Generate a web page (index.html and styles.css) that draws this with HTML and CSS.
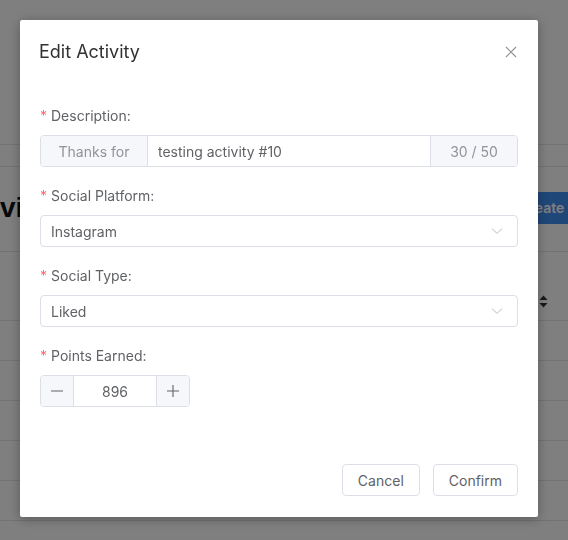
FILE: index.html
```html
<!DOCTYPE html>
<html>
<head>
<meta charset="utf-8">
<link rel="stylesheet" href="styles.css">
</head>
<body>
<div class="page">
  <div class="topbar"></div>
  <div class="subbar"></div>
  <div class="titlerow">
    <h1 class="heading">Activities</h1>
    <button class="create">Create Activity</button>
  </div>
  <div class="thead">
    <span class="sort"><svg width="9" height="13" viewBox="0 0 9 13"><path d="M4.5 0.5 L8.5 5 L0.5 5 Z" fill="#333"/><path d="M4.5 12.5 L8.5 8 L0.5 8 Z" fill="#333"/></svg></span>
  </div>
  <div class="trow"></div>
  <div class="trow"></div>
  <div class="trow"></div>
  <div class="trow"></div>
  <div class="trow"></div>
</div>

<div class="overlay">
  <div class="dialog">
    <div class="dialog-header">
      <span class="dialog-title">Edit Activity</span>
      <span class="close"><svg width="12" height="12" viewBox="0 0 12 12"><path d="M1 1 L11 11 M11 1 L1 11" stroke="#909399" stroke-width="1.2" fill="none"/></svg></span>
    </div>
    <div class="dialog-body">
      <div class="form-item">
        <div class="label"><span class="req">*</span>Description:</div>
        <div class="input-group">
          <div class="addon prefix">Thanks for</div>
          <div class="field">testing activity #10</div>
          <div class="addon suffix">30 / 50</div>
        </div>
      </div>
      <div class="form-item">
        <div class="label"><span class="req">*</span>Social Platform:</div>
        <div class="select">
          <span>Instagram</span>
          <svg class="chev" width="12" height="8" viewBox="0 0 12 8"><path d="M1 1.5 L6 6.5 L11 1.5" stroke="#b8bcc4" stroke-width="1" fill="none"/></svg>
        </div>
      </div>
      <div class="form-item">
        <div class="label"><span class="req">*</span>Social Type:</div>
        <div class="select">
          <span>Liked</span>
          <svg class="chev" width="12" height="8" viewBox="0 0 12 8"><path d="M1 1.5 L6 6.5 L11 1.5" stroke="#b8bcc4" stroke-width="1" fill="none"/></svg>
        </div>
      </div>
      <div class="form-item">
        <div class="label"><span class="req">*</span>Points Earned:</div>
        <div class="number">
          <div class="num-btn minus"><svg width="14" height="14" viewBox="0 0 14 14"><path d="M1 7 H13" stroke="#606266" stroke-width="1.1"/></svg></div>
          <div class="num-value">896</div>
          <div class="num-btn plus"><svg width="14" height="14" viewBox="0 0 14 14"><path d="M1 7 H13 M7 1 V13" stroke="#606266" stroke-width="1.1"/></svg></div>
        </div>
      </div>
    </div>
    <div class="dialog-footer">
      <button class="btn">Cancel</button>
      <button class="btn">Confirm</button>
    </div>
  </div>
</div>
</body>
</html>
```
FILE: styles.css
```css
* { box-sizing: border-box; }
html, body { margin: 0; padding: 0; }
body {
  width: 568px;
  height: 540px;
  overflow: hidden;
  background: #fff;
  font-family: Inter, "Noto Sans", sans-serif;
  position: relative;
}
.page { width: 568px; }
.topbar { height: 145px; border-bottom: 1px solid #e6e6e6; }
.subbar { height: 22px; border-bottom: 1px solid #e6e6e6; }
.titlerow {
  height: 85px;
  border-bottom: 1px solid #e6e6e6;
  display: flex;
  align-items: center;
  justify-content: space-between;
  padding-bottom: 3px;
}
.heading {
  flex-shrink: 0;
  white-space: nowrap;
  margin: 0 0 0 -53px;
  font-family: "Liberation Sans", Arial, sans-serif;
  font-size: 28px;
  font-weight: 700;
  color: #111;
}
.create {
  flex-shrink: 0;
  white-space: nowrap;
  margin-right: -64px;
  height: 32px;
  border: none;
  border-radius: 4px;
  background: #3f8ef0;
  color: #fff;
  font-family: Inter, sans-serif;
  font-size: 14px;
  font-weight: 600;
  padding: 0 12px;
}
.thead {
  height: 69px;
  border-bottom: 1px solid #e6e6e6;
  display: flex;
  align-items: center;
  justify-content: flex-end;
  padding-right: 20px;
  padding-top: 30px;
}
.sort { display: flex; }
.trow { height: 40px; border-bottom: 1px solid #e6e6e6; }

.overlay {
  position: fixed;
  inset: 0;
  background: rgba(0,0,0,0.5);
  padding: 20px 30px 0 20px;
}
.dialog {
  width: 518px;
  background: #fff;
  border-radius: 2px;
  box-shadow: 0 2px 12px rgba(0,0,0,0.3);
}
.dialog-header {
  display: flex;
  justify-content: space-between;
  align-items: flex-start;
  padding: 20px 21px 0 19px;
  height: 44px;
}
.dialog-title {
  font-size: 18px;
  line-height: 24px;
  color: #303133;
}
.close { display: flex; padding-top: 6px; }
.dialog-body { padding: 41px 20px 0 20px; }
.form-item { margin-bottom: 18px; }
.label {
  font-size: 14px;
  line-height: 22px;
  padding-bottom: 8px;
  color: #606266;
}
.req { color: #f56c6c; margin-right: 4px; }
.input-group {
  display: flex;
  height: 32px;
  border: 1px solid #dcdfe6;
  border-radius: 4px;
  font-size: 14px;
  color: #606266;
  overflow: hidden;
}
.addon {
  background: #f5f7fa;
  color: #909399;
  display: flex;
  align-items: center;
  justify-content: center;
}
.prefix { width: 107px; border-right: 1px solid #dcdfe6; }
.suffix { width: 87px; border-left: 1px solid #dcdfe6; }
.field {
  flex: 1;
  display: flex;
  align-items: center;
  padding-left: 10px;
}
.select {
  height: 32px;
  border: 1px solid #dcdfe6;
  border-radius: 4px;
  display: flex;
  align-items: center;
  justify-content: space-between;
  padding: 0 14px 0 10px;
  font-size: 14px;
  color: #606266;
}
.chev { display: block; }
.number {
  display: flex;
  width: 150px;
  height: 32px;
  border: 1px solid #dcdfe6;
  border-radius: 4px;
  overflow: hidden;
}
.num-btn {
  width: 33px;
  background: #f5f7fa;
  display: flex;
  align-items: center;
  justify-content: center;
}
.minus { border-right: 1px solid #dcdfe6; width: 33px; }
.plus { border-left: 1px solid #dcdfe6; width: 33px; }
.num-value {
  flex: 1;
  display: flex;
  align-items: center;
  justify-content: center;
  font-size: 14px;
  color: #606266;
}
.dialog-footer {
  display: flex;
  justify-content: flex-end;
  gap: 13px;
  padding: 39px 20px 21px;
}
.btn {
  height: 32px;
  padding: 0 15px;
  background: #fff;
  border: 1px solid #dcdfe6;
  border-radius: 4px;
  font-family: Inter, sans-serif;
  font-size: 14px;
  color: #606266;
}
```
